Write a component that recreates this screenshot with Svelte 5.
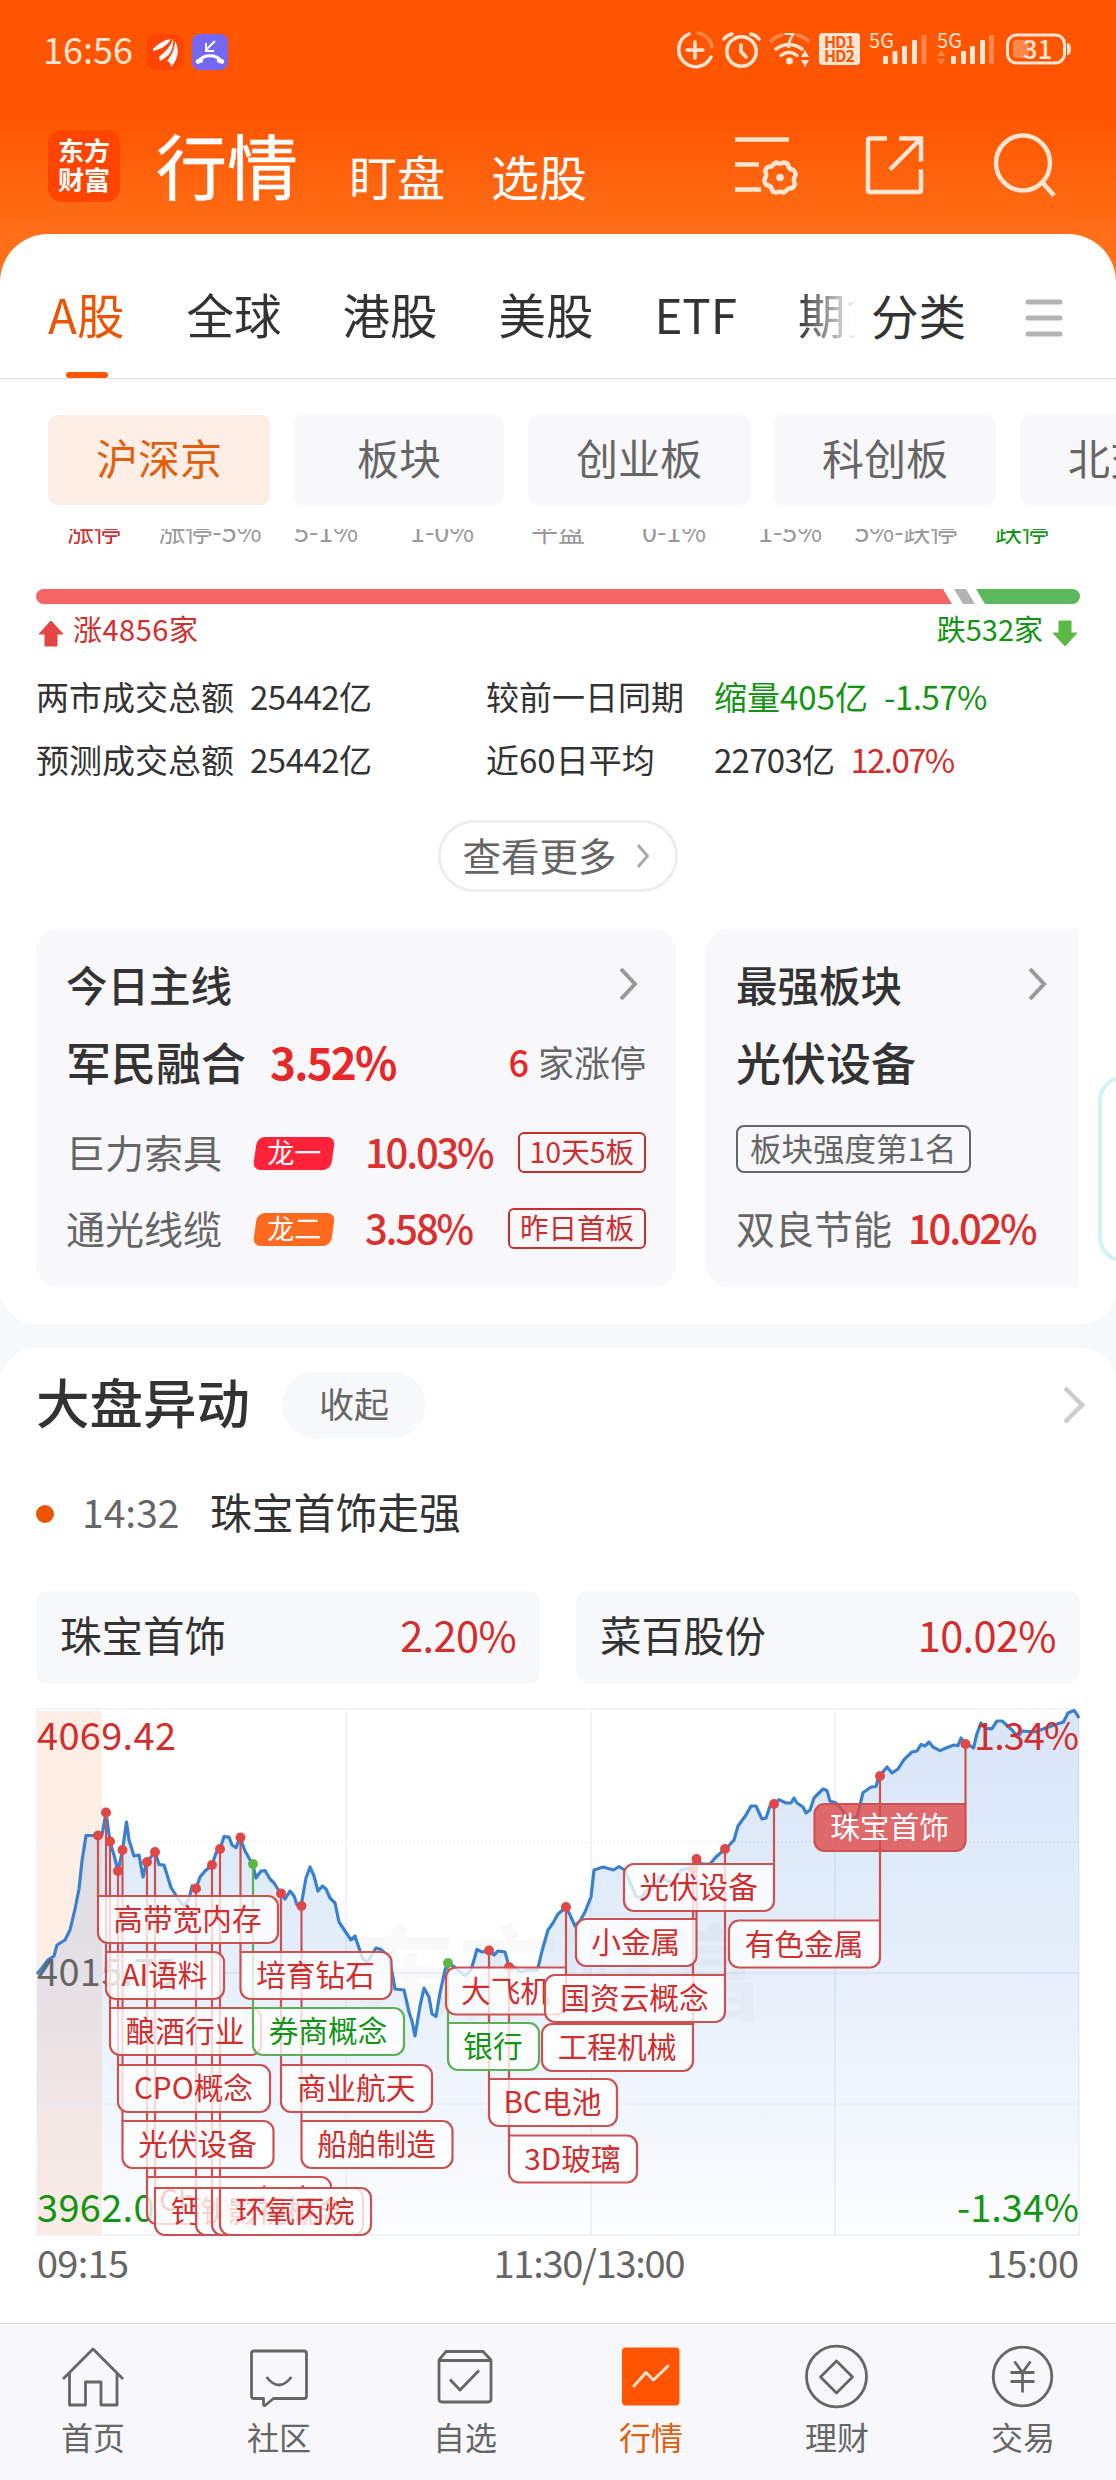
<script lang="ts">
  type Tag = {
    text: string;
    x: number;
    y: number;
    w: number;
    dot: number;
    side?: 'right';
    tone?: 'green' | 'solid';
  };

  const tabs = ['A股', '全球', '港股', '美股', 'ETF', '期货'];
  const chips = [
    { text: '沪深京', width: 222 },
    { text: '板块', width: 210 },
    { text: '创业板', width: 222 },
    { text: '科创板', width: 222 },
    { text: '北交所', width: 222 },
  ];
  const ranges = ['涨停', '涨停-5%', '5-1%', '1-0%', '平盘', '0-1%', '1-5%', '5%-跌停', '跌停'];

  let activeTab = $state('A股');
  let activeChip = $state('沪深京');

  const linePoints =
    '37,1974 42,1968 48,1960 54,1956 57,1945 65,1940 70,1930 75,1909 79,1889 82,1861 86,1835.5 98,1835.5 102,1835 ' +
    '106,1812.5 110,1841.6 114,1855 118,1871 122.5,1850 126.5,1822 129,1840 134,1856 139,1855 143,1877 146.5,1862.6 ' +
    '155,1852 159,1864.6 164,1865 171,1887.5 179,1900 184,1906 189,1899 192,1886 196,1888.7 200,1877 205,1871 ' +
    '212,1865 216,1853 220,1849 224,1836.6 229,1837 232,1845 236,1847.7 240,1837.4 245,1851 252.5,1864 256,1878 ' +
    '261,1871 265,1870.7 270,1879 274,1883 279,1891 281,1893.6 285,1899 290,1891 294,1896 297,1904.7 301,1906 ' +
    '306,1878 310,1867 314,1876 318,1891 322.5,1886 326,1889 330,1898 335,1903 339,1922 345,1931 351,1940 355,1936 ' +
    '358,1945 362.5,1958 367,1962.5 371,1956 376,1948 381,1949.5 389,1957 392,1972 395,1989 404,1990 409,2012 ' +
    '412,2021 415,2036 420,2006 424,1988 429,1997 432,2014 436,2016.5 440,1993 445,1970 448,1963 454,1966.7 ' +
    '459,1971 465,1975.5 471,1970 474,1960 477,1949.5 482,1952 489,1950.7 494,1955 498,1951 505,1952 509,1966.7 ' +
    '514,1967 521,1972 527,1970 537.5,1970 542,1951 548,1930 553,1923 558,1914 566,1907 570,1915 575,1926 580,1921 ' +
    '585,1912 591,1897 594,1870 603,1867 613.5,1870 619,1866.5 624.5,1870 630,1882 636,1896 641,1898 646.5,1890.6 ' +
    '655,1888 659,1877 669,1881.6 674,1883 681,1870 691,1868 696,1859 702,1864 710,1864 716,1857 725,1849 ' +
    '728,1846.5 734,1840 738,1826 746,1815 751,1806 756,1806 762,1819 766,1818 770,1806 774,1804 779,1799.6 ' +
    '786,1803 791,1803 794,1798 797,1803 803,1807 806,1813 810,1810 814,1798 823,1789 827,1790.6 830,1801 ' +
    '836,1803 843,1811 850,1820 857,1817 863,1792.7 871,1787 876,1786.5 879,1776 883,1772 887,1767 892,1773 ' +
    '898,1769 904,1759.6 912,1752 917,1751 921,1744.5 925,1746 929,1742 933,1747 940,1750.6 946,1748 954,1745 ' +
    '958,1745.7 961,1738 965,1744 969,1745 973.5,1748 977,1733.5 981,1723 986,1728.6 992,1728.6 997,1721 1002,1721 ' +
    '1006.6,1725 1012,1730 1017.6,1737 1022,1731 1034,1732 1043,1729 1054,1725 1063.5,1722 1068,1713 1074,1710.6 ' +
    '1076,1713 1079,1718';

  const tags: Tag[] = [
    { text: '高带宽内存', x: 98, y: 1896, w: 180, dot: 1835.5 },
    { text: 'AI语料', x: 106, y: 1952, w: 118, dot: 1812.5 },
    { text: '酿酒行业', x: 110, y: 2008, w: 151, dot: 1841.5 },
    { text: 'CPO概念', x: 118, y: 2065, w: 152, dot: 1871 },
    { text: '光伏设备', x: 122.5, y: 2121, w: 151, dot: 1850 },
    { text: 'Chiplet概念', x: 147, y: 2177, w: 184, dot: 1862 },
    { text: '钙钛矿电池', x: 155, y: 2188, w: 181, dot: 1852 },
    { text: '煤炭', x: 196, y: 2188, w: 90, dot: 1888.5 },
    { text: '影视概念', x: 212, y: 2188, w: 151, dot: 1865 },
    { text: '环氧丙烷', x: 220, y: 2188, w: 151, dot: 1849 },
    { text: '培育钻石', x: 240.5, y: 1952, w: 151, dot: 1837.5 },
    { text: '券商概念', x: 253, y: 2008, w: 151, dot: 1864, tone: 'green' },
    { text: '商业航天', x: 281, y: 2065, w: 151, dot: 1893.5 },
    { text: '船舶制造', x: 301.5, y: 2121, w: 151, dot: 1906 },
    { text: '大飞机', x: 446, y: 1967.5, w: 120, dot: 1907, side: 'right' },
    { text: '银行', x: 448, y: 2023, w: 91, dot: 1963, tone: 'green' },
    { text: 'BC电池', x: 489, y: 2079, w: 128, dot: 1950.5 },
    { text: '3D玻璃', x: 509, y: 2135.5, w: 128, dot: 1967 },
    { text: '工程机械', x: 542, y: 2024, w: 151, dot: 1869, side: 'right' },
    { text: '小金属', x: 576, y: 1919, w: 120.5, dot: 1859, side: 'right' },
    { text: '国资云概念', x: 545, y: 1975, w: 180, dot: 1849, side: 'right' },
    { text: '光伏设备', x: 624, y: 1864, w: 150, dot: 1804, side: 'right' },
    { text: '有色金属', x: 729, y: 1920.5, w: 151, dot: 1776, side: 'right' },
    { text: '珠宝首饰', x: 814.5, y: 1804, w: 151, dot: 1744, side: 'right', tone: 'solid' },
  ];

  const tagHeight = 47;
  const stemX = (t: Tag) => (t.side === 'right' ? t.x + t.w : t.x);

  // rounded box, square at the corner where the stem comes in
  function tagPath({ x, y, w, side }: Tag) {
    const h = tagHeight;
    const r = 10;
    const tl = side === 'right' ? r : 0;
    const tr = side === 'right' ? 0 : r;
    return (
      `M${x + tl} ${y}H${x + w - tr}a${tr} ${tr} 0 0 1 ${tr} ${tr}V${y + h - r}a${r} ${r} 0 0 1 ${-r} ${r}` +
      `H${x + r}a${r} ${r} 0 0 1 ${-r} ${-r}V${y + tl}a${tl} ${tl} 0 0 1 ${tl} ${-tl}Z`
    );
  }
</script>

<div class="app">
  <header class="top">
    <div class="status">
      <span class="clock">16:56</span>
      <svg class="app-badge" viewBox="0 0 36 36">
        <rect width="36" height="36" rx="8" fill="#ff4500" />
        <path d="M6 15C12 9 17 6 24 5C20 12 14 15 6 17Z" fill="#fff" />
        <path d="M12 23C18 18 23 13 26 5C30 15 22 22 13 27Z" fill="#fff" />
        <path d="M20 27C25 21 28 14 28 7C33 15 31 26 24 33C24 30 23 28 20 27Z" fill="#fff" />
        <path d="M8 19C15 17 21 13 25 6M18 27C24 21 27 14 27 6" fill="none" stroke="#ff4500" stroke-width="1.2" />
      </svg>
      <svg class="app-badge" viewBox="0 0 36 36">
        <rect width="36" height="36" rx="8" fill="#7468f5" />
        <path d="M23 7L14 16M14 9V17H22" fill="none" stroke="#fff" stroke-width="2" />
        <path d="M7 27C12 20 24 20 29 27" fill="none" stroke="#fff" stroke-width="3.2" />
        <path d="M4 26L11 23V28L6 30Q3 29 4 26ZM32 26L25 23V28L30 30Q33 29 32 26Z" fill="#fff" />
      </svg>
      <svg class="signals" viewBox="672 26 402 52">
        <g fill="none" stroke="#ffe6d3" stroke-width="3.5" stroke-linecap="round">
          <path d="M689 34A17 17 0 1 0 711 57" />
          <path d="M698 33A17 17 0 0 1 712 47" opacity=".35" />
          <path d="M687 50H703M695 42V58" />
          <circle cx="741.500" cy="51.500" r="14.700" />
          <path d="M724 39Q727 35 732 34M751 34Q756 35 759 39M741 45V51.500L746 57" />
          <path d="M771 41Q776 36 782 35M797 35Q803 36 808 41" opacity=".35" />
          <path d="M776 49Q789 40 802 49M781 55.500Q789 49 797 55.500" />
        </g>
        <g fill="#ffe6d3">
          <circle cx="789.500" cy="61" r="3.500" />
          <path d="M801 57L805 50L809 57ZM801 60L805 67L809 60Z" />
          <rect x="819" y="33" width="41" height="32" rx="4" />
          <rect x="883" y="56" width="5" height="8" rx="1" />
          <rect x="892.500" y="51" width="5" height="13" rx="1" />
          <rect x="902" y="46" width="5" height="18" rx="1" />
          <rect x="912" y="40" width="5" height="24" rx="1" />
          <rect x="921.500" y="35" width="5" height="29" rx="1" opacity=".35" />
          <rect x="951" y="56" width="5" height="8" rx="1" />
          <rect x="961" y="51" width="5" height="13" rx="1" />
          <rect x="970" y="46" width="5" height="18" rx="1" />
          <rect x="980" y="40" width="5" height="24" rx="1" />
          <rect x="989" y="35" width="5" height="29" rx="1" opacity=".35" />
          <path d="M937 56L941 50L945 56ZM937 59L941 65L945 59Z" opacity=".35" />
          <rect x="1013" y="40" width="16" height="18" rx="3" opacity=".35" />
          <path d="M1067 43Q1071 43 1071 49Q1071 55 1067 55Z" />
        </g>
        <rect x="1007.500" y="35" width="57" height="28" rx="9" fill="none" stroke="#ffe6d3" stroke-width="3" />
        <g class="signal-text">
          <text x="789.500" y="48" font-size="21">7</text>
          <text x="839.500" y="47.500" font-size="16" textLength="31" class="hd">HD1</text>
          <text x="839.500" y="62" font-size="16" textLength="31" class="hd">HD2</text>
          <text x="881.500" y="47.500" font-size="20" class="thin">5G</text>
          <text x="949.500" y="47.500" font-size="20" class="thin">5G</text>
          <text x="1037.500" y="59" font-size="26">31</text>
        </g>
      </svg>
    </div>

    <div class="nav">
      <div class="logo"><span>东方</span><span>财富</span></div>
      <h1>行情</h1>
      <span class="nav-link">盯盘</span>
      <span class="nav-link">选股</span>
      <div class="actions">
        <svg width="64" height="60" viewBox="0 0 64 60">
          <path d="M0 4.500H54M0 29.500H24M0 54.500H26" />
          <path
            d="M41.500 27.500Q45 29.500 48.500 27.500Q53 27.500 53.500 31.500Q54.500 34.500 58.500 35Q62 38.500 59.500 42.500Q58 45 60 49Q58.500 54 53.500 53.500Q50.500 56.500 48.500 57.500Q45 56 41.500 57.500Q37 57.500 36.500 53.500Q35.500 50.500 31.500 50Q28 46.500 30.500 42.500Q32 40 30 36Q31.500 31 36.500 31.500Q38.500 28.500 41.500 27.500Z"
          />
          <circle cx="45" cy="42.500" r="3.800" class="dot" />
        </svg>
        <svg width="66" height="60" viewBox="0 0 66 60">
          <path d="M24 3.500H7Q5 3.500 5 5.500V55Q5 57 7 57H56Q58 57 58 55V34.500M36 3.500H58V26.500M27 34.500L57 4.500" />
        </svg>
        <svg width="64" height="66" viewBox="0 0 64 66">
          <ellipse cx="30" cy="28" rx="27" ry="27.500" />
          <path d="M49 47L61 60.500" />
        </svg>
      </div>
    </div>
  </header>

  <section class="sheet">
    <nav class="tabs">
      <div class="tab-list">
        {#each tabs as tab}
          <button class="tab" class:active={tab === activeTab} onclick={() => (activeTab = tab)}>{tab}</button>
        {/each}
      </div>
      <span class="sort">分类</span>
      <svg class="menu" width="36" height="38" viewBox="0 0 36 38">
        <path d="M2 3H34M2 19H34M2 35H34" />
      </svg>
    </nav>

    <div class="chips">
      {#each chips as chip}
        <button
          class="chip"
          class:active={chip.text === activeChip}
          style:width="{chip.width}px"
          onclick={() => (activeChip = chip.text)}>{chip.text}</button
        >
      {/each}
    </div>

    <div class="ranges">
      {#each ranges as range}
        <span class:up={range === '涨停'} class:down={range === '跌停'}>{range}</span>
      {/each}
    </div>

    <svg class="ratio" width="1044" height="15" viewBox="0 0 1044 15">
      <path d="M7.500 0H907L916 15H7.500A7.500 7.500 0 0 1 7.500 0Z" fill="#f56565" />
      <path d="M918 0H930L939 15H927Z" fill="#b3b3b3" />
      <path d="M940 0H1036.500A7.500 7.500 0 0 1 1036.500 15H949Z" fill="#5cb85c" />
    </svg>
    <div class="counts">
      <svg width="26" height="27" viewBox="0 0 26 27">
        <path d="M13 1L25 14H19V26H7V14H1Z" fill="#e64545" stroke="#e64545" stroke-linejoin="round" />
      </svg>
      <span class="up">涨4856家</span>
      <span class="down last">跌532家</span>
      <svg width="26" height="27" viewBox="0 0 26 27">
        <path d="M13 26L25 13H19V1H7V13H1Z" fill="#5cb845" stroke="#5cb845" stroke-linejoin="round" />
      </svg>
    </div>

    <div class="stats">
      <span>两市成交总额<b>25442亿</b></span>
      <span>较前一日同期</span>
      <span class="down">缩量405亿<b>-1.57%</b></span>
      <span>预测成交总额<b>25442亿</b></span>
      <span>近60日平均</span>
      <span class="average">22703亿<b class="up">12.07%</b></span>
    </div>

    <button class="more">
      查看更多
      <svg width="14" height="26" viewBox="0 0 14 26"><path d="M2 2L11.500 13L2 24" /></svg>
    </button>

    <div class="cards">
      <div class="card main">
        <div class="card-title">
          今日主线
          <svg width="20" height="34" viewBox="0 0 20 34"><path d="M3 2L17 17L3 32" /></svg>
        </div>
        <div class="card-lead">
          军民融合<em>3.52%</em>
          <span class="limit"><i>6</i>家涨停</span>
        </div>
        <div class="stock">
          <span class="name">巨力索具</span>
          <span class="rank first"><span>龙一</span></span>
          <em>10.03%</em>
          <span class="mark">10天5板</span>
        </div>
        <div class="stock">
          <span class="name">通光线缆</span>
          <span class="rank second"><span>龙二</span></span>
          <em>3.58%</em>
          <span class="mark">昨日首板</span>
        </div>
      </div>
      <div class="card side">
        <div class="card-title">
          最强板块
          <svg width="20" height="34" viewBox="0 0 20 34"><path d="M3 2L17 17L3 32" /></svg>
        </div>
        <div class="card-lead">光伏设备</div>
        <div class="stock"><span class="mark plain">板块强度第1名</span></div>
        <div class="stock">
          <span class="name">双良节能</span>
          <em>10.02%</em>
        </div>
      </div>
    </div>
    <div class="drawer"></div>
  </section>

  <section class="moves">
    <div class="moves-head">
      <h2>大盘异动</h2>
      <button class="fold">收起</button>
      <svg width="24" height="40" viewBox="0 0 24 40"><path d="M3 3L20 20L3 37" /></svg>
    </div>
    <div class="event">
      <span class="bullet"></span>
      <time>14:32</time>
      <span>珠宝首饰走强</span>
    </div>
    <div class="pair">
      <div class="quote">珠宝首饰<span>2.20%</span></div>
      <div class="quote">菜百股份<span>10.02%</span></div>
    </div>

    <svg class="chart" width="1044" height="580" viewBox="36 1706 1044 580">
      <defs>
        <linearGradient id="area" gradientUnits="userSpaceOnUse" x1="0" y1="1710" x2="0" y2="2235">
          <stop offset="0" stop-color="#3c82dc" stop-opacity=".2" />
          <stop offset=".5" stop-color="#3c82dc" stop-opacity=".13" />
          <stop offset="1" stop-color="#3c82dc" stop-opacity=".015" />
        </linearGradient>
      </defs>
      <rect x="38" y="1711" width="64" height="524" fill="#feeee6" />
      <path d="M37 1709H1079V2235H37ZM346 1709V2235M591 1709V2235M835 1709V2235M37 1973H1079" class="grid" />
      <path d="M37 1842H1079M37 2104H1079" class="grid dotted" />
      <text x="560" y="2012" class="watermark">东方财富</text>
      <polygon points="37,2235 {linePoints} 1079,2235" fill="url(#area)" />
      <polyline points={linePoints} class="line" />

      <g class="axis">
        <text x="37" y="1750" textLength="139" class="up">4069.42</text>
        <text x="37" y="1986" textLength="139">4015.75</text>
        <text x="37" y="2222" textLength="139" class="down">3962.08</text>
        <text x="1079" y="1750" textLength="105" class="up end">1.34%</text>
        <text x="1079" y="2222" class="down end">-1.34%</text>
        <text x="37" y="2278" textLength="92">09:15</text>
        <text x="589.500" y="2278" textLength="192" class="mid">11:30/13:00</text>
        <text x="1079" y="2278" textLength="93" class="end">15:00</text>
      </g>

      {#each tags as tag}
        <g class="stem {tag.tone ?? ''}">
          <line x1={stemX(tag)} x2={stemX(tag)} y1={tag.dot} y2={tag.y} />
          <circle cx={stemX(tag)} cy={tag.dot} r="5" />
        </g>
      {/each}
      {#each tags as tag}
        <g class="tag {tag.tone ?? ''}">
          <path d={tagPath(tag)} />
          <text x={tag.x + tag.w / 2 - 0.5} y={tag.y + 34}>{tag.text}</text>
        </g>
      {/each}
    </svg>
  </section>

  <footer class="tabbar">
    <div class="item">
      <svg viewBox="0 0 62 62">
        <path d="M1 33L31 3L61 33M7.500 27V59H23.500V36H39V59H55V27" />
      </svg>
      首页
    </div>
    <div class="item">
      <svg viewBox="0 0 62 62">
        <path d="M6 5H56Q58.500 5 58.500 7.500V50Q58.500 52.500 56 52.500H25.500L17 59.500Q15.500 60 15.500 58V52.500H6Q3.500 52.500 3.500 50V7.500Q3.500 5 6 5Z" />
        <path d="M18.500 31Q31 47 43.500 31" />
      </svg>
      社区
    </div>
    <div class="item">
      <svg viewBox="0 0 62 62">
        <path d="M12 5.500H49L57 14V53Q57 56 54 56H8Q5 56 5 53V14ZM5 14.500H57" />
        <path d="M16 33.500L26 44L45 24.500" />
      </svg>
      自选
    </div>
    <div class="item active">
      <svg viewBox="0 0 62 62">
        <rect x="2" y="1.500" width="57.500" height="58" rx="4" class="fill" />
        <path d="M14 40L26 26.500L33.500 34L48 20" class="trend" />
      </svg>
      行情
    </div>
    <div class="item">
      <svg viewBox="0 0 62 62">
        <ellipse cx="30.500" cy="30.500" rx="30" ry="30.300" />
        <path d="M30.500 15L46.500 31L30.500 47L14.500 31Z" />
      </svg>
      理财
    </div>
    <div class="item">
      <svg viewBox="0 0 62 62">
        <ellipse cx="30.500" cy="30.500" rx="29.300" ry="29.300" />
        <path d="M22.500 15.500L30.500 26.500L38.500 15.500M18.500 26.500H42.500M18.500 35.500H42.500M30.500 26.500V46.500" />
      </svg>
      交易
    </div>
  </footer>
</div>

<style>
  :global(body) {
    background: #f7f8fa;
  }
  .app {
    width: 1116px;
    height: 2480px;
    display: flex;
    flex-direction: column;
    overflow: hidden;
    position: relative;
    font-family: 'Noto Sans CJK SC', sans-serif;
    color: #333;
    white-space: nowrap;
    background: linear-gradient(#ff5500 115px, #ff7019 240px, #ff7019 300px, #f7f8fa 300px);
  }
  button {
    border: none;
    padding: 0;
    font: inherit;
    color: inherit;
    cursor: pointer;
  }
  h1,
  h2 {
    margin: 0;
  }
  em,
  i {
    font-style: normal;
  }
  svg {
    flex: none;
    display: block;
    overflow: visible;
  }
  .up {
    color: #d12e2e;
    fill: #d12e2e;
  }
  .down {
    color: #149414;
    fill: #149414;
  }

  /* header */
  .top {
    height: 234px;
    flex: none;
    color: #fff;
  }
  .status {
    display: flex;
    align-items: center;
    height: 103px;
    padding: 0 42px 0 43px;
    box-sizing: border-box;
  }
  .clock {
    font-size: 36px;
    line-height: 40px;
    color: #ffe6d3;
    width: 104px;
    padding-bottom: 7px;
  }
  .app-badge {
    width: 36px;
    height: 36px;
    margin-right: 9px;
  }
  .signals {
    width: 402px;
    height: 52px;
    margin-left: auto;
  }
  .signal-text {
    fill: #ffe6d3;
    font-weight: 500;
    text-anchor: middle;
  }
  .signal-text .hd {
    fill: #ff5500;
    font-weight: 700;
  }
  .signal-text .thin {
    font-weight: 400;
  }
  .nav {
    display: flex;
    align-items: center;
    height: 131px;
    padding: 0 59px 6px 48px;
    box-sizing: border-box;
  }
  .logo {
    width: 72px;
    height: 72px;
    border-radius: 14px;
    background: #ff4500;
    display: flex;
    flex-direction: column;
    align-items: center;
    justify-content: center;
    font-size: 26px;
    line-height: 29px;
    padding-bottom: 4px;
    box-sizing: border-box;
    font-weight: 700;
  }
  h1 {
    margin-left: 36px;
    font-size: 71px;
    line-height: 72px;
    font-weight: 400;
    -webkit-text-stroke: 0.6px #fff;
    width: 193px;
    padding-bottom: 6px;
  }
  .nav-link {
    font-size: 48px;
    line-height: 50px;
    width: 142px;
    padding-top: 19px;
  }
  .actions {
    display: flex;
    margin-left: auto;
    gap: 64px;
    padding-top: 4px;
  }
  .actions svg {
    fill: none;
    stroke: #ffe6d3;
    stroke-width: 4.5;
  }
  .actions .dot {
    fill: #ffe6d3;
    stroke: none;
  }

  /* market overview */
  .sheet {
    position: relative;
    height: 1090px;
    flex: none;
    background: #fff;
    border-radius: 48px 48px 36px 36px;
    display: flex;
    flex-direction: column;
  }
  .tabs {
    height: 145px;
    box-sizing: border-box;
    border-bottom: 1px solid #e0e0e0;
    display: flex;
    align-items: center;
    padding-left: 48px;
    font-size: 47.5px;
  }
  .tab-list {
    display: flex;
    gap: 61px;
    width: 809px;
    height: 145px;
    overflow: hidden;
    mask-image: linear-gradient(90deg, #000 750px, transparent 809px);
  }
  .tab {
    position: relative;
    background: none;
    height: 144px;
    line-height: 60px;
    padding-top: 17px;
  }
  .tab.active {
    color: #ea5504;
    margin-right: 1px;
  }
  .tab.active::after {
    content: '';
    position: absolute;
    left: 50%;
    bottom: 0;
    width: 42px;
    height: 6px;
    margin-left: -20px;
    border-radius: 3px;
    background: #ff5500;
  }
  .sort {
    margin-left: 14px;
    line-height: 60px;
    padding-top: 17px;
  }
  .menu {
    margin-left: 60px;
    margin-top: 23px;
    fill: none;
    stroke: #b3b3b3;
    stroke-width: 5;
    stroke-linecap: round;
  }
  .chips {
    display: flex;
    gap: 24px;
    padding: 36px 0 24px 48px;
    overflow: hidden;
  }
  .chip {
    flex: none;
    height: 90px;
    border-radius: 9px;
    background: #f8f8fb;
    color: #666;
    font-size: 42px;
    line-height: 82px;
    padding-bottom: 7px;
  }
  .chip.active {
    background: #ffeee5;
    color: #e0600f;
  }
  .ranges {
    display: grid;
    grid-template-columns: repeat(9, 116px);
    padding-left: 36px;
    height: 60px;
    overflow: hidden;
    text-align: center;
    font-size: 27px;
    line-height: 30px;
    color: #999;
  }
  .ranges span {
    margin-top: -13px;
  }
  .ranges .up {
    color: #d12e2e;
  }
  .ranges .down {
    color: #149414;
  }
  .ratio {
    margin-left: 36px;
  }
  .counts {
    display: flex;
    align-items: center;
    padding: 14px 38px 0;
    gap: 9px;
    height: 30px;
    font-size: 29px;
    line-height: 30px;
  }
  .counts span {
    padding-bottom: 10px;
  }
  .counts .up {
    letter-spacing: 0.5px;
  }
  .last {
    margin-left: auto;
  }
  .stats {
    display: grid;
    grid-template-columns: 450px 228px auto;
    grid-auto-rows: 63px;
    padding-left: 36px;
    margin-top: 18px;
    font-size: 33px;
    line-height: 60px;
  }
  .stats b {
    font-weight: 400;
    margin-left: 16px;
    letter-spacing: -0.5px;
  }
  .stats .average {
    letter-spacing: -0.7px;
  }
  .average b {
    letter-spacing: -1.6px;
  }
  .more {
    align-self: center;
    box-sizing: border-box;
    width: 240px;
    height: 72px;
    margin-top: 28px;
    border: 3px solid #eee;
    border-radius: 36px;
    background: #fff;
    color: #666;
    font-size: 38.5px;
    line-height: 58px;
    display: flex;
    align-items: center;
    justify-content: center;
    gap: 19px;
    padding: 0 4px 5px 0;
  }
  .more svg,
  .card svg {
    fill: none;
    stroke: #aaa;
    stroke-width: 3;
  }
  .more svg {
    margin-top: 5px;
  }
  .cards {
    display: flex;
    gap: 30px;
    margin: 37px 38px 0 36px;
  }
  .card {
    flex: none;
    height: 358px;
    box-sizing: border-box;
    background: #f8f8fb;
    border-radius: 22px;
    padding: 20px 30px 0;
  }
  .card.main {
    width: 640px;
  }
  .card.side {
    width: 372px;
    border-radius: 22px 0 0 22px;
  }
  .card svg {
    stroke: #999;
    stroke-width: 4;
    margin-right: 8px;
  }
  .card.side svg {
    margin-right: 1px;
  }
  .card-title {
    display: flex;
    align-items: center;
    justify-content: space-between;
    height: 70px;
    font-size: 41.5px;
    font-weight: 500;
  }
  .card-lead {
    display: flex;
    align-items: center;
    height: 84px;
    font-size: 45px;
    font-weight: 500;
  }
  .card-lead em {
    margin-left: 24px;
    color: #e62828;
    font-size: 44px;
    font-weight: 700;
    letter-spacing: -1.8px;
  }
  .limit {
    margin-left: auto;
    font-size: 36px;
    font-weight: 400;
    color: #666;
  }
  .limit i {
    color: #e62828;
    font-weight: 500;
    margin-right: 9px;
  }
  .stock {
    display: flex;
    align-items: center;
    height: 76px;
    font-size: 39px;
  }
  .card-lead + .stock {
    margin-top: 10px;
  }
  .name {
    flex: none;
    color: #666;
    width: 188px;
  }
  .side .name {
    width: 172px;
  }
  .stock em {
    font-size: 40px;
    font-weight: 500;
    color: #d93030;
    letter-spacing: -2.2px;
  }
  .rank {
    flex: none;
    width: 78px;
    height: 33px;
    margin: 4px 32px 0 1px;
    border-radius: 8px;
    transform: skewX(-8deg);
    color: #fff;
    font-size: 27px;
    line-height: 30px;
    text-align: center;
  }
  .rank span {
    display: block;
    transform: skewX(8deg);
  }
  .first {
    background: #ff2239;
  }
  .second {
    background: #ff6a1f;
  }
  .mark {
    margin: 3px 0 0 auto;
    border: 2px solid #c22f2f;
    border-radius: 6px;
    padding: 0 10px 3px;
    font-size: 28.5px;
    line-height: 34px;
    color: #c93030;
  }
  .mark.plain {
    margin: -4px 0 0;
    padding: 0 13px 3px 12px;
    border-color: #666;
    border-radius: 8px;
    color: #666;
    font-size: 31.5px;
    line-height: 41px;
  }
  .drawer {
    position: absolute;
    left: 1098px;
    top: 841px;
    width: 60px;
    height: 180px;
    border: 4px solid #d0f3f5;
    border-radius: 26px;
    background: #fff;
  }

  /* intraday moves */
  .moves {
    height: 975px;
    flex: none;
    margin-top: 24px;
    background: #fff;
    border-radius: 36px 36px 0 0;
    padding: 0 30px 0 36px;
  }
  .moves-head {
    display: flex;
    align-items: center;
    height: 114px;
  }
  h2 {
    font-size: 53.5px;
    font-weight: 500;
    line-height: 60px;
    padding-bottom: 8px;
    width: 246px;
  }
  .fold {
    width: 144px;
    height: 66px;
    border-radius: 33px;
    background: #f7f8fa;
    color: #666;
    font-size: 35px;
    line-height: 60px;
    padding-bottom: 5px;
  }
  .moves-head svg {
    margin-left: auto;
    fill: none;
    stroke: #ccc;
    stroke-width: 4.5;
  }
  .event {
    display: flex;
    align-items: center;
    height: 104px;
    font-size: 41.8px;
    line-height: 60px;
  }
  .event time,
  .event span {
    padding-bottom: 6px;
  }
  .event .bullet {
    width: 18px;
    height: 18px;
    padding: 0;
    border-radius: 50%;
    background: #ea5504;
  }
  .event time {
    margin-left: 28px;
    width: 128px;
    font-size: 39px;
    color: #666;
  }
  .pair {
    display: grid;
    grid-template-columns: 504px 504px;
    gap: 36px;
    padding-top: 25px;
  }
  .quote {
    display: flex;
    justify-content: space-between;
    height: 86px;
    line-height: 86px;
    padding: 0 24px 7px;
    border-radius: 12px;
    background: #f7f8fa;
    font-size: 41.5px;
  }
  .quote span {
    color: #d12e2e;
    letter-spacing: -0.6px;
  }
  .chart {
    margin-top: 22px;
  }
  .grid {
    fill: none;
    stroke: #f1f4f8;
    stroke-width: 2;
  }
  .dotted {
    stroke-dasharray: 2 2;
  }
  .watermark {
    font-size: 103px;
    font-weight: 700;
    text-anchor: middle;
    fill: #000;
    opacity: 0.02;
  }
  .line {
    fill: none;
    stroke: #3a80cf;
    stroke-width: 3.2;
    stroke-linejoin: round;
  }
  .axis {
    font-size: 38px;
    fill: #666;
  }
  .axis .end {
    text-anchor: end;
  }
  .axis .mid {
    text-anchor: middle;
  }
  .stem line {
    stroke: #cc5252;
    stroke-width: 2.2;
  }
  .stem circle {
    fill: #e04848;
  }
  .stem.green line {
    stroke: #5cb055;
  }
  .stem.green circle {
    fill: #5cb845;
  }
  .tag path {
    fill: rgba(255, 255, 255, 0.78);
    stroke: #cc5252;
    stroke-width: 2.2;
  }
  .tag text {
    font-size: 29.7px;
    text-anchor: middle;
    fill: #d12e2e;
  }
  .tag.green path {
    stroke: #5cb055;
  }
  .tag.green text {
    fill: #149414;
  }
  .tag.solid path {
    fill: rgba(224, 72, 72, 0.8);
  }
  .tag.solid text {
    fill: #fff;
  }

  /* bottom bar */
  .tabbar {
    display: grid;
    grid-template-columns: repeat(6, 1fr);
    height: 157px;
    box-sizing: border-box;
    flex: none;
    border-top: 1px solid #ddd;
    background: #f8f8fb;
    position: relative;
  }
  .item {
    display: flex;
    flex-direction: column;
    align-items: center;
    padding-top: 22px;
    font-size: 32px;
    line-height: 56px;
    color: #666;
  }
  .item svg {
    width: 62px;
    height: 62px;
    fill: none;
    stroke: #666;
    stroke-width: 2.8;
    stroke-linejoin: round;
  }
  .item.active {
    color: #e0600f;
  }
  .item .fill {
    fill: #ff5500;
    stroke: none;
  }
  .item .trend {
    stroke: #ffe6d3;
    stroke-linecap: round;
  }
</style>
